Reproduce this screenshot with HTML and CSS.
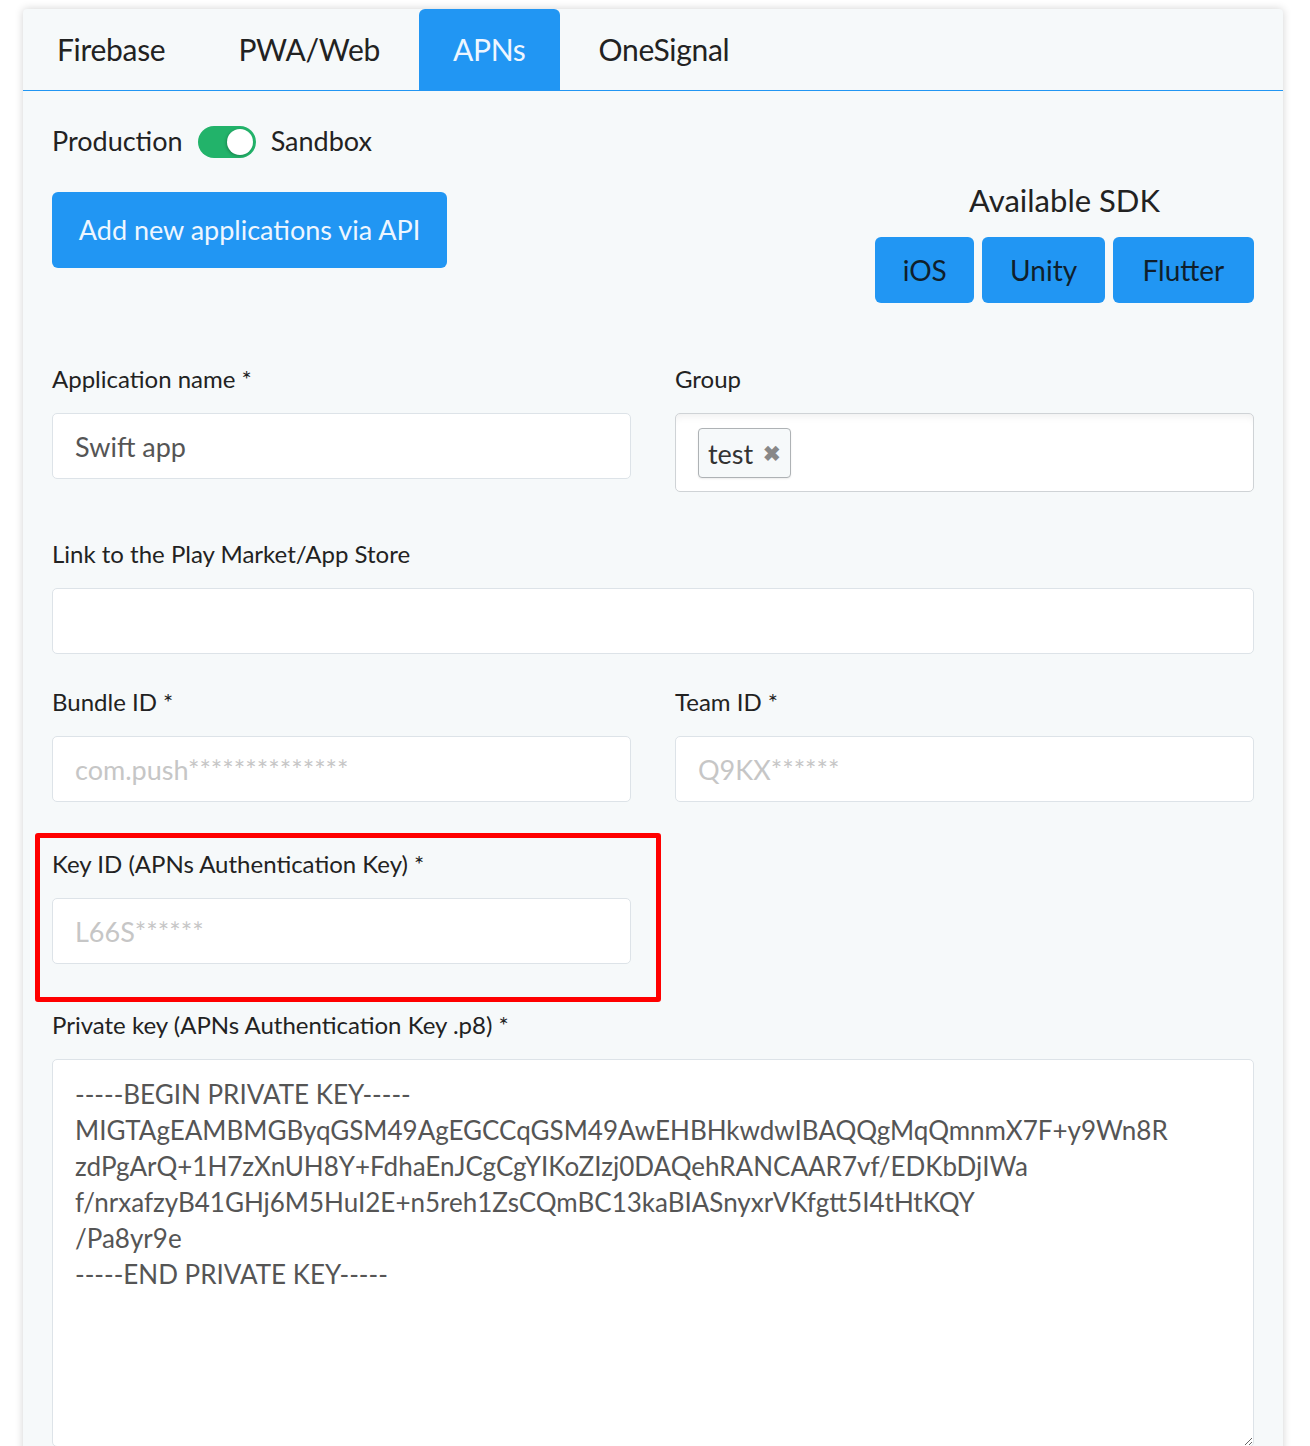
FILE: index.html
```html
<!DOCTYPE html>
<html lang="en">
<head>
    <meta charset="UTF-8">
    <title>Push applications</title>
    <link rel="stylesheet" href="styles.css">
</head>
<body>
    <div class="card">
        <!-- Tabs -->
        <ul class="tabs">
            <li class="tab">Firebase</li>
            <li class="tab">PWA/Web</li>
            <li class="tab active">APNs</li>
            <li class="tab">OneSignal</li>
        </ul>

        <div class="card-body">
            <!-- Mode switch -->
            <div class="mode-row">
                <span class="label-text">Production</span>
                <span class="switch"><span class="knob"></span></span>
                <span class="label-text">Sandbox</span>
            </div>

            <div class="head-row">
                <button class="btn btn-api">Add new applications via API</button>
                <div class="sdk">
                    <div class="sdk-title">Available SDK</div>
                    <div class="sdk-buttons">
                        <button class="btn btn-sdk sdk-ios">iOS</button>
                        <button class="btn btn-sdk sdk-unity">Unity</button>
                        <button class="btn btn-sdk sdk-flutter">Flutter</button>
                    </div>
                </div>
            </div>

            <!-- Form -->
            <div class="row row-first">
                <div class="form-group">
                    <label>Application name *</label>
                    <input class="input" type="text" value="Swift app">
                </div>
                <div class="form-group">
                    <label>Group</label>
                    <div class="tags-input">
                        <span class="tag">test <span class="tag-remove">&#10006;</span></span>
                    </div>
                </div>
            </div>

            <div class="row row-single row-link">
                <div class="form-group">
                    <label>Link to the Play Market/App Store</label>
                    <input class="input" type="text">
                </div>
            </div>

            <div class="row row-ids">
                <div class="form-group">
                    <label>Bundle ID *</label>
                    <input class="input" type="text" placeholder="com.push**************">
                </div>
                <div class="form-group">
                    <label>Team ID *</label>
                    <input class="input" type="text" placeholder="Q9KX******">
                </div>
            </div>

            <div class="row row-key">
                <div class="highlight">
                    <label>Key ID (APNs Authentication Key) *</label>
                    <input class="input" type="text" placeholder="L66S******">
                </div>
            </div>

            <div class="row-single">
                <div class="form-group">
                    <label>Private key (APNs Authentication Key .p8) *</label>
                    <textarea class="textarea">-----BEGIN PRIVATE KEY-----
MIGTAgEAMBMGByqGSM49AgEGCCqGSM49AwEHBHkwdwIBAQQgMqQmnmX7F+y9Wn8R
zdPgArQ+1H7zXnUH8Y+FdhaEnJCgCgYIKoZIzj0DAQehRANCAAR7vf/EDKbDjIWa
f/nrxafzyB41GHj6M5HuI2E+n5reh1ZsCQmBC13kaBIASnyxrVKfgtt5I4tHtKQY
/Pa8yr9e
-----END PRIVATE KEY-----</textarea>
                </div>
            </div>
        </div>
    </div>
</body>
</html>
```

FILE: styles.css
```css
/* Reset */
* {
    margin: 0;
    padding: 0;
    box-sizing: border-box;
}

body {
    font-family: 'Lato', 'Noto Sans', sans-serif;
    color: #222;
    background: #fff;
    overflow: hidden;
}

/* Card */
.card {
    margin: 9px 27px 0 23px;
    background: #f6f9fa;
    box-shadow: 0 0 8px rgba(0, 0, 0, 0.18);
    border-radius: 4px 4px 0 0;
    min-height: 1500px;
}

/* Tabs */
.tabs {
    display: flex;
    gap: 5px;
    list-style: none;
    height: 82px;
    border-bottom: 1px solid #2196f3;
}

.tab {
    padding: 0 34px;
    font-size: 30px;
    letter-spacing: -0.3px;
    line-height: 81px;
    color: #222;
}

.tab.active {
    background: #2196f3;
    color: #eef6ff;
    border-radius: 6px 6px 0 0;
    height: 82px;
}

.card-body {
    padding: 35px 29px 0;
}

/* Mode switch */
.mode-row {
    display: flex;
    align-items: center;
    gap: 15px;
    font-size: 27px;
    height: 32px;
}

.mode-row .label-text {
    margin-top: -4px;
}

.switch {
    position: relative;
    width: 58px;
    height: 32px;
    border-radius: 16px;
    background: #22b36a;
}

.switch .knob {
    position: absolute;
    right: 3px;
    top: 3px;
    width: 26px;
    height: 26px;
    border-radius: 50%;
    background: #fff;
    box-shadow: -1px 1px 3px rgba(0, 0, 0, 0.25);
}

/* Header row */
.head-row {
    display: flex;
    justify-content: space-between;
    align-items: flex-start;
    margin-top: 24px;
}

.btn {
    border: none;
    background: #2196f3;
    border-radius: 6px;
    font-family: inherit;
    cursor: pointer;
}

.btn-api {
    margin-top: 10px;
    width: 395px;
    height: 76px;
    padding-bottom: 2px;
    font-size: 27px;
    color: #eef6ff;
}

.sdk {
    width: 379px;
    text-align: center;
}

.sdk-title {
    font-size: 31px;
    line-height: 36px;
}

.sdk-buttons {
    display: flex;
    gap: 8px;
    margin-top: 19px;
}

.btn-sdk {
    height: 66px;
    font-size: 28px;
    color: #0f1f2c;
}

.sdk-ios { width: 100px; }
.sdk-unity { width: 123px; }
.sdk-flutter { width: 142px; }

/* Form */
.row {
    display: grid;
    grid-template-columns: 1fr 1fr;
    gap: 44px;
}

.row-first {
    margin-top: 62px;
}

.row-link {
    margin-top: 48px;
}

.row-ids {
    margin-top: 34px;
}

.row-key {
    margin-top: 31px;
}

.row-single {
    display: block;
}

label {
    display: block;
    font-size: 24px;
    line-height: 28px;
    margin-bottom: 20px;
    color: #222;
}

.input {
    display: block;
    width: 100%;
    height: 66px;
    padding: 0 22px;
    border: 1px solid #dde3e8;
    border-radius: 5px;
    background: #fff;
    font-family: inherit;
    font-size: 27px;
    color: #555;
    outline: none;
}

.input::placeholder {
    color: #c6c6c6;
}

.tags-input {
    height: 79px;
    border: 1px solid #cfd3d6;
    border-radius: 5px;
    background: #fff;
    box-shadow: inset 0 8px 8px -6px rgba(0, 0, 0, 0.07);
    padding: 14px 22px;
}

.tag {
    display: inline-flex;
    align-items: center;
    gap: 10px;
    height: 50px;
    padding: 0 9px;
    border: 1px solid #aeb2b5;
    border-radius: 4px;
    background: #f6f9fa;
    font-size: 27px;
    color: #333;
    box-shadow: 0 1px 2px rgba(0, 0, 0, 0.08);
}

.tag-remove {
    font-size: 21px;
    color: #888;
    font-weight: 700;
}

/* Highlight box */
.highlight {
    margin-left: -17px;
    margin-right: -30px;
    border: 5px solid #ff0000;
    border-radius: 3px;
    padding: 12px 25px 33px 12px;
}

.row-single .form-group {
    margin-top: 9px;
}

.textarea {
    display: block;
    width: 100%;
    height: 388px;
    padding: 16px 22px;
    border: 1px solid #dde3e8;
    border-radius: 5px;
    background: #fff;
    font-family: inherit;
    font-size: 26px;
    line-height: 36px;
    color: #555;
    resize: vertical;
    outline: none;
}
```
